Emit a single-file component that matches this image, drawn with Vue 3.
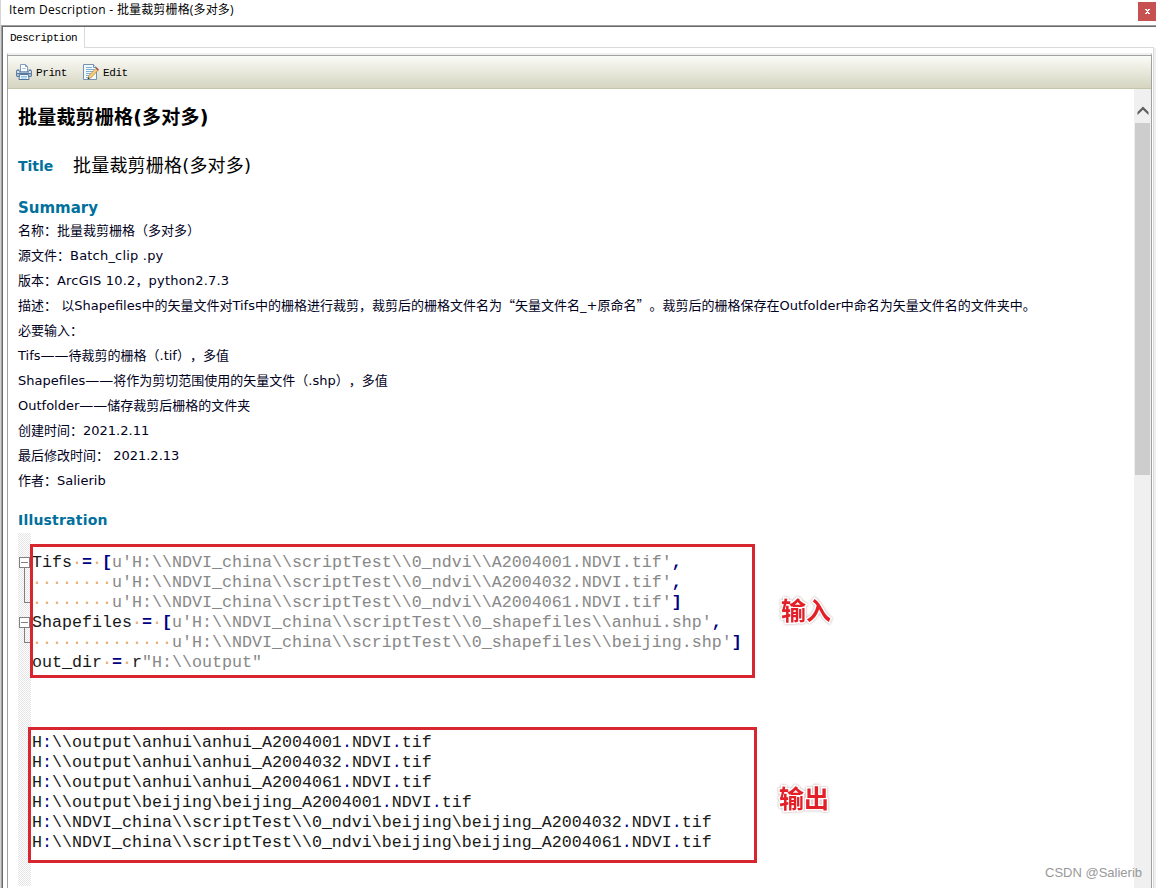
<script setup>
const summaryLines = [
  '名称：批量裁剪栅格（多对多）',
  '源文件：Batch_clip .py',
  '版本：ArcGIS 10.2，python2.7.3',
  '描述： 以Shapefiles中的矢量文件对Tifs中的栅格进行裁剪，裁剪后的栅格文件名为“矢量文件名_+原命名”。裁剪后的栅格保存在Outfolder中命名为矢量文件名的文件夹中。',
  '必要输入：',
  'Tifs——待裁剪的栅格（.tif），多值',
  'Shapefiles——将作为剪切范围使用的矢量文件（.shp），多值',
  'Outfolder——储存裁剪后栅格的文件夹',
  '创建时间：2021.2.11',
  '最后修改时间： 2021.2.13',
  '作者：Salierib',
]

// split a line into latin / dash / chinese runs
function splitRuns(line) {
  return line.match(/[\x20-\x7e]+|—+|[^\x20-\x7e—]+/g).map((text) => {
    if (text[0] === '—') return { text, type: 'dash' }
    return { text, type: /^[\x20-\x7e]/.test(text) ? 'latin' : 'cjk' }
  })
}

const name = (text) => ({ text, type: 'name' })
const op = (text) => ({ text, type: 'op' })
const str = (text) => ({ text, type: 'str' })
const ws = (count) => ({ text: '·'.repeat(count), type: 'ws' })

const inputLines = [
  [name('Tifs'), ws(1), op('='), ws(1), op('['), str("u'H:\\\\NDVI_china\\\\scriptTest\\\\0_ndvi\\\\A2004001.NDVI.tif'"), op(',')],
  [ws(8), str("u'H:\\\\NDVI_china\\\\scriptTest\\\\0_ndvi\\\\A2004032.NDVI.tif'"), op(',')],
  [ws(8), str("u'H:\\\\NDVI_china\\\\scriptTest\\\\0_ndvi\\\\A2004061.NDVI.tif'"), op(']')],
  [name('Shapefiles'), ws(1), op('='), ws(1), op('['), str("u'H:\\\\NDVI_china\\\\scriptTest\\\\0_shapefiles\\\\anhui.shp'"), op(',')],
  [ws(14), str("u'H:\\\\NDVI_china\\\\scriptTest\\\\0_shapefiles\\\\beijing.shp'"), op(']')],
  [name('out_dir'), ws(1), op('='), ws(1), name('r'), str('"H:\\\\output"')],
]

const outputPaths = [
  'H:\\\\output\\anhui\\anhui_A2004001.NDVI.tif',
  'H:\\\\output\\anhui\\anhui_A2004032.NDVI.tif',
  'H:\\\\output\\anhui\\anhui_A2004061.NDVI.tif',
  'H:\\\\output\\beijing\\beijing_A2004001.NDVI.tif',
  'H:\\\\NDVI_china\\\\scriptTest\\\\0_ndvi\\beijing\\beijing_A2004032.NDVI.tif',
  'H:\\\\NDVI_china\\\\scriptTest\\\\0_ndvi\\beijing\\beijing_A2004061.NDVI.tif',
]

const outputLines = outputPaths.map((path) =>
  path.split(/([:.])/).map((text) => ({ text, type: /^[:.]$/.test(text) ? 'punct' : 'name' }))
)

const codeLines = [...inputLines, [], [], [], ...outputLines]
</script>

<template>
  <div class="window">
    <header class="title-bar">
      <span class="title-text"><span class="title-latin">Item Description - </span>批量裁剪栅格(多对多)</span>
      <button class="close-btn" aria-label="Close">
        <svg width="5" height="5" viewBox="0 0 5 5" shape-rendering="crispEdges">
          <path d="M0 0h2v1H0zM3 0h2v1H3zM1 1h3v1H1zM2 2h1v1H2zM1 3h3v1H1zM0 4h2v1H0zM3 4h2v1H3z" fill="#fff" />
        </svg>
      </button>
    </header>

    <div class="frame">
      <nav class="tabs">
        <div class="tab">Description</div>
        <div class="tab-rest"></div>
      </nav>

      <div class="page">
        <div class="panel">
          <div class="toolbar">
            <button class="tool print">
              <svg width="16" height="16" viewBox="0 0 16 16">
                <path d="M4.500 8V.5h5l2 2V8z" fill="#fff" stroke="#7f9dbd" />
                <path d="M9.500.5v2h2" fill="none" stroke="#7f9dbd" />
                <path d="M6 4.500h4" stroke="#b5cade" />
                <path d="M1 5.500h2.500v2h9v-2H15l1 1.500v5l-1 1H1l-1-1V7z" fill="#5d7da3" />
                <path d="M1 7h2v1.500h10V7h2v2H1z" fill="#d5e2ef" />
                <path d="M1 10h14v2H1z" fill="#a9bfd6" />
                <path d="M3.500 10.500h9l.5 5H3z" fill="#f4fbff" stroke="#5475a0" />
                <path d="M5 12.500h6M5 14h6" stroke="#8cc4e2" />
              </svg>
              <span>Print</span>
            </button>
            <button class="tool edit">
              <svg width="17" height="16" viewBox="0 0 17 16">
                <path d="M.5.5h10l3 3v12H.5z" fill="#f4f9fd" stroke="#7392b4" />
                <path d="M10.500.5v3h3" fill="#d6e4f1" stroke="#7392b4" />
                <path d="M3 3.500h6M3 5.500h8M3 7.500h7M3 9.500h5M3 11.500h3M3 13.500h2" stroke="#7eb0d4" />
                <path d="M5 14.800l1-3.300L13.100 4.200l2 2L8.100 13.700z" fill="#f5cf7c" stroke="#a97835" stroke-width=".7" />
                <path d="M12.700 4.600l1.100-1.100 2.100 2.100-1.100 1.100z" fill="#a84a4a" />
                <path d="M4.700 15.200l.6-1.900 1.300 1.200z" fill="#222" />
              </svg>
              <span>Edit</span>
            </button>
          </div>

          <div class="body">
            <main class="content">
              <h1>批量裁剪栅格(多对多)</h1>

              <div class="title-row">
                <h2>Title</h2>
                <span class="title-value">批量裁剪栅格(多对多)</span>
              </div>

              <h2 class="summary-heading">Summary</h2>
              <div class="summary">
                <p v-for="(line, i) in summaryLines" :key="i"><span v-for="(run, j) in splitRuns(line)" :key="j" :class="run.type">{{ run.text }}</span></p>
              </div>

              <h2 class="illustration-heading">Illustration</h2>
              <div class="illustration">
                <div class="gutter">
                  <svg width="13" height="353" viewBox="0 0 13 353" shape-rendering="crispEdges">
                    <g fill="#fff" stroke="#808080">
                      <path d="M6.500 35v34.500H12M6.500 95v14.500H12" fill="none" />
                      <rect x="1.500" y="24.500" width="10" height="10" />
                      <rect x="1.500" y="84.500" width="10" height="10" />
                      <path d="M3 29.500h7M3 89.500h7" />
                    </g>
                  </svg>
                </div>
                <div class="code">
                  <div v-for="(line, i) in codeLines" :key="i" class="code-line"><span v-for="(token, j) in line" :key="j" :class="'t-' + token.type">{{ token.text }}</span></div>
                </div>

                <!-- 标注 -->
                <div class="mark mark-input"></div>
                <div class="mark mark-output"></div>
                <span class="label label-input">输入</span>
                <span class="label label-output">输出</span>
              </div>
            </main>

            <div class="scrollbar">
              <svg class="arrow" width="12" height="10" viewBox="0 0 12 10">
                <path d="M.5 6L6 .5 11.500 6v3L6 3.800.5 9z" fill="#606060" />
              </svg>
              <div class="thumb"></div>
            </div>
          </div>
        </div>
      </div>
    </div>

    <span class="watermark">CSDN @Salierib</span>
  </div>
</template>

<style>
body {
  margin: 0;
  overflow: hidden;
  background: #fff;
}
</style>

<style scoped>
.window {
  position: relative;
  box-sizing: border-box;
  width: 1156px;
  height: 888px;
  padding-left: 1px;
  overflow: hidden;
  display: flex;
  flex-direction: column;
  background: linear-gradient(90deg, #d4d4d4 1px, #fff 1px);
  color: #000;
}

button {
  border: none;
  padding: 0;
  background: none;
}

/* 标题栏 */
.title-bar {
  height: 25px;
  display: flex;
  justify-content: space-between;
  flex-shrink: 0;
}

.title-text {
  padding-left: 8px;
  line-height: 20px;
  font-family: 'Open Sans', 'Noto Sans CJK SC', sans-serif;
  font-size: 12px;
  letter-spacing: 0.15px;
  white-space: pre;
}

.title-latin {
  letter-spacing: 0.27px;
}

.close-btn {
  width: 18px;
  height: 19px;
  margin-top: 2px;
  display: flex;
  align-items: center;
  justify-content: center;
  background: #c75050;
}

/* 外框 */
.frame {
  flex: 1;
  min-height: 0;
  display: flex;
  flex-direction: column;
  border-top: 1px solid #a0a0a0;
  border-left: 1px solid #a0a0a0;
  box-shadow: inset 1px 1px 0 #696969;
  padding: 1px 0 0 1px;
}

.tabs {
  height: 21px;
  display: flex;
  flex-shrink: 0;
}

.tab {
  box-sizing: border-box;
  width: 82px;
  padding-left: 7px;
  border-right: 1px solid #dadada;
  font-family: 'Liberation Mono', 'Noto Sans CJK SC', monospace;
  font-size: 11px;
  letter-spacing: -0.5px;
  line-height: 22px;
}

.tab-rest {
  flex: 1;
  margin-right: 2px;
  border-bottom: 1px solid #dadada;
}

.page {
  flex: 1;
  min-height: 0;
  display: flex;
  margin-right: 2px;
  padding: 5px 1px 0 4px;
  border-right: 1px solid #dadada;
  box-shadow: 2px 0 0 #f0f0f0;
}

.panel {
  flex: 1;
  min-width: 0;
  display: flex;
  flex-direction: column;
  border-top: 2px solid #f0f0f0;
  border-right: 1px solid #a0a0a0;
  border-left: 1px solid #a0a0a0;
}

.toolbar {
  box-sizing: border-box;
  height: 34px;
  padding: 0 0 0 8px;
  display: flex;
  align-items: center;
  gap: 16px;
  flex-shrink: 0;
  border-top: 1px solid #a0a0a0;
  border-bottom: 1px solid #c6c6aa;
  background: linear-gradient(#fbfbf7, #d5d5c1);
}

.tool {
  display: flex;
  align-items: center;
  gap: 4px;
  font-family: 'Liberation Mono', monospace;
  font-size: 11px;
  letter-spacing: -0.4px;
  color: #000;
}

.tool span {
  padding-top: 1px;
}

.edit {
  gap: 3px;
}

.body {
  flex: 1;
  min-height: 0;
  display: flex;
}

.content {
  flex: 1;
  min-width: 0;
  padding: 12px 0 0 10px;
  font-family: 'DejaVu Sans', 'Noto Sans CJK SC', sans-serif;
}

h1 {
  margin: 0;
  font-size: 19px;
  line-height: 32px;
  font-weight: bold;
  letter-spacing: 0.2px;
}

h2 {
  margin: 0;
  font-size: 14px;
  font-weight: bold;
  color: #00709c;
}

.title-row {
  height: 34px;
  margin-top: 16px;
  display: flex;
  align-items: center;
}

.title-row h2 {
  width: 55px;
}

.title-value {
  font-size: 18px;
  line-height: 34px;
  letter-spacing: 0.2px;
}

.summary-heading {
  margin-top: 13px;
  font-size: 15px;
  line-height: 24px;
}

.summary {
  margin-top: -3px;
  font-size: 13px;
  color: #00001c;
  text-spacing-trim: space-all;
}

.summary p {
  height: 25px;
  margin: 0;
  line-height: 25px;
  white-space: pre;
}

.summary p:nth-child(2) .latin,
.summary p:nth-child(3) .latin {
  letter-spacing: 0.2px;
}

.cjk {
  font-family: 'Noto Sans CJK SC', sans-serif;
}

.dash {
  font-size: 14px;
}

.illustration-heading {
  margin-top: 16px;
  padding-bottom: 1px;
  line-height: 24px;
  letter-spacing: 0.2px;
}

/* 插图 */
.illustration {
  position: relative;
  height: 353px;
  display: flex;
}

.gutter {
  width: 13px;
  background: repeating-conic-gradient(#e4e4e4 0 25%, #fff 0 50%) 0 0 / 2px 2px;
}

.gutter svg {
  display: block;
}

.code {
  padding: 20px 0 0 1px;
  font-family: 'Liberation Mono', monospace;
  font-size: 16.667px;
}

.code-line {
  height: 20px;
  line-height: 20px;
  white-space: pre;
}

.t-name {
  color: #181818;
}

.t-str {
  color: #888;
}

.t-op {
  color: #000080;
  font-weight: bold;
}

.t-punct {
  color: #000080;
}

.t-ws {
  color: #e3ad6b;
}

.mark {
  position: absolute;
  box-sizing: border-box;
  border: 3px solid #d7262f;
}

.mark-input {
  left: 12px;
  top: 11px;
  width: 725px;
  height: 134px;
}

.mark-output {
  left: 10px;
  top: 194px;
  width: 729px;
  height: 136px;
}

.label {
  position: absolute;
  font-family: 'Noto Sans CJK SC', sans-serif;
  font-size: 25px;
  line-height: 30px;
  font-weight: bold;
  color: #e32028;
  -webkit-text-stroke: 3px #fff;
  paint-order: stroke fill;
  filter: drop-shadow(0 0 1px #b9a0a0);
}

.label-input {
  left: 763px;
  top: 61px;
}

.label-output {
  left: 761px;
  top: 249px;
}

/* 滚动条 */
.scrollbar {
  width: 17px;
  display: flex;
  flex-direction: column;
  align-items: center;
  background: #f0f0f0;
}

.arrow {
  margin-top: 17px;
}

.thumb {
  width: 15px;
  height: 352px;
  margin-top: 7px;
  background: #cdcdcd;
}

.watermark {
  position: absolute;
  right: 14px;
  bottom: 6px;
  font-family: 'Liberation Sans', Arial, sans-serif;
  font-size: 13px;
  line-height: 18px;
  color: #999;
}
</style>
